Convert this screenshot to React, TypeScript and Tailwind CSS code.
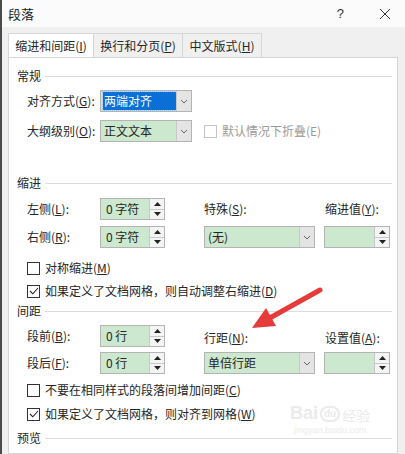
import React from 'react'

const green = 'bg-[#cce8cf]'

function SectionHeader({ title }: { title: string }) {
  return (
    <div className="h-[20px] flex items-center gap-[4px]">
      <span className="leading-none">{title}</span>
      <div className="flex-1 h-px bg-[#dcdcdc]" />
    </div>
  )
}

function Chevron() {
  return (
    <svg width="8" height="5" viewBox="0 0 8 5">
      <path d="M1 1 L4 4 L7 1" fill="none" stroke="#666" strokeWidth="1" />
    </svg>
  )
}

function Select({ value, w, selected }: { value: string; w: string; selected?: boolean }) {
  return (
    <div className={`${w} h-[22px] border border-[#b4b4b4] ${green} flex`}>
      <div className="flex-1 flex items-center pl-[2px]">
        {selected ? (
          <span className="h-[18px] w-full flex items-center px-[1px] bg-[#0a6fd6] text-white outline outline-1 outline-dotted outline-[#9bc3ef]">
            {value}
          </span>
        ) : (
          <span className="pl-[1px]">{value}</span>
        )}
      </div>
      <div className="w-[15px] bg-[#e4e4e4] border-l border-[#c8c8c8] flex items-center justify-center">
        <Chevron />
      </div>
    </div>
  )
}

function Spin({ value, w }: { value?: string; w: string }) {
  return (
    <div className={`${w} h-[22px] border border-[#b4b4b4] ${green} flex`}>
      <div className="flex-1 flex items-center pl-[5px]">{value}</div>
      <div className="w-[15px] bg-[#f4f4f4] border-l border-[#c8c8c8] flex flex-col">
        <div className="flex-1 flex items-center justify-center border-b border-[#c8c8c8]">
          <svg width="7" height="4" viewBox="0 0 7 4">
            <path d="M0 4 L3.5 0 L7 4 Z" fill="#222" />
          </svg>
        </div>
        <div className="flex-1 flex items-center justify-center">
          <svg width="7" height="4" viewBox="0 0 7 4">
            <path d="M0 0 L3.5 4 L7 0 Z" fill="#222" />
          </svg>
        </div>
      </div>
    </div>
  )
}

function Checkbox({ checked, disabled }: { checked?: boolean; disabled?: boolean }) {
  return (
    <div
      className={`w-[13px] h-[13px] border bg-white flex items-center justify-center ${
        disabled ? 'border-[#c4c4c4]' : 'border-[#333]'
      }`}
    >
      {checked && (
        <svg width="10" height="8" viewBox="0 0 10 8">
          <path d="M1 4 L3.8 6.8 L9 1" fill="none" stroke="#222" strokeWidth="1.1" />
        </svg>
      )}
    </div>
  )
}

function CheckRow({ checked, children }: { checked?: boolean; children: React.ReactNode }) {
  return (
    <div className="h-[20px] flex items-center gap-[5px] ml-[10px]">
      <Checkbox checked={checked} />
      <span>{children}</span>
    </div>
  )
}

export default function App() {
  return (
    <div className="w-[405px] h-[454px] overflow-hidden bg-[#f0f0f0] border-l-2 border-[#4b4b4b] flex flex-col relative text-[12px] text-[#262626] font-['Microsoft_YaHei','Noto_Sans_CJK_SC',sans-serif]">
      {/* title bar */}
      <div className="h-[27px] shrink-0 bg-[#fbfbfb] flex items-center pl-[6px] pr-[14px]">
        <span className="text-[13px] text-[#222]">段落</span>
        <span className="ml-auto text-[13px] text-[#333] font-['Liberation_Sans',sans-serif]">?</span>
        <svg className="ml-[35px]" width="12" height="12" viewBox="0 0 12 12">
          <path d="M1 1 L11 11 M11 1 L1 11" stroke="#333" strokeWidth="1" />
        </svg>
      </div>

      {/* tabs */}
      <div className="flex pl-[6px] pt-[6px] shrink-0">
        <div className="w-[86px] h-[24px] bg-white border border-b-0 border-[#d6d6d6] flex items-center justify-center">
          缩进和间距(<u>I</u>)
        </div>
        <div className="w-[89px] h-[24px] border-t border-r border-[#d6d6d6] flex items-center justify-center">
          换行和分页(<u>P</u>)
        </div>
        <div className="w-[79px] h-[24px] border-t border-r border-[#d6d6d6] flex items-center justify-center">
          中文版式(<u>H</u>)
        </div>
      </div>

      {/* panel */}
      <div className="flex-1 ml-[6px] mr-[7px] bg-white border border-[#d6d6d6] pl-[8px] pr-[5px] pt-[8px] flex flex-col">
        <SectionHeader title="常规" />
        <div className="mt-[4px] h-[22px] flex items-center ml-[10px]">
          <span className="w-[73px]">对齐方式(<u>G</u>):</span>
          <Select value="两端对齐" w="w-[92px]" selected />
        </div>
        <div className="mt-[8px] h-[22px] flex items-center ml-[10px]">
          <span className="w-[73px]">大纲级别(<u>O</u>):</span>
          <Select value="正文文本" w="w-[92px]" />
          <div className="ml-[12px] flex items-center gap-[5px] text-[#9a9a9a]">
            <Checkbox disabled />
            <span>默认情况下折叠(E)</span>
          </div>
        </div>

        <div className="mt-[31px]">
          <SectionHeader title="缩进" />
        </div>
        <div className="mt-[5px] h-[22px] flex items-center ml-[10px]">
          <span className="w-[73px]">左侧(<u>L</u>):</span>
          <Spin value="0 字符" w="w-[65px]" />
          <span className="ml-[39px] w-[121px]">特殊(<u>S</u>):</span>
          <span>缩进值(<u>Y</u>):</span>
        </div>
        <div className="mt-[6px] h-[22px] flex items-center ml-[10px]">
          <span className="w-[73px]">右侧(<u>R</u>):</span>
          <Spin value="0 字符" w="w-[65px]" />
          <div className="ml-[39px]">
            <Select value="(无)" w="w-[111px]" />
          </div>
          <div className="ml-[9px]">
            <Spin w="w-[66px]" />
          </div>
        </div>
        <div className="mt-[10px]">
          <CheckRow>
            对称缩进(<u>M</u>)
          </CheckRow>
        </div>
        <div className="mt-[3px]">
          <CheckRow checked>
            如果定义了文档网格，则自动调整右缩进(<u>D</u>)
          </CheckRow>
        </div>

        <SectionHeader title="间距" />
        <div className="mt-[4px] h-[22px] flex items-center ml-[10px]">
          <span className="w-[73px]">段前(<u>B</u>):</span>
          <Spin value="0 行" w="w-[65px]" />
          <span className="ml-[39px] w-[121px] mt-[4px]">行距(<u>N</u>):</span>
          <span className="mt-[4px]">设置值(<u>A</u>):</span>
        </div>
        <div className="mt-[5px] h-[22px] flex items-center ml-[10px]">
          <span className="w-[73px]">段后(<u>F</u>):</span>
          <Spin value="0 行" w="w-[65px]" />
          <div className="ml-[39px]">
            <Select value="单倍行距" w="w-[111px]" />
          </div>
          <div className="ml-[9px]">
            <Spin w="w-[66px]" />
          </div>
        </div>
        <div className="mt-[6px]">
          <CheckRow>
            不要在相同样式的段落间增加间距(<u>C</u>)
          </CheckRow>
        </div>
        <div className="mt-[4px]">
          <CheckRow checked>
            如果定义了文档网格，则对齐到网格(<u>W</u>)
          </CheckRow>
        </div>
        <div className="mt-[4px]">
          <SectionHeader title="预览" />
        </div>
      </div>

      {/* watermark */}
      <div className="absolute left-[288px] top-[404px] flex flex-col items-start text-[#ebebeb] pointer-events-none">
        <div className="flex items-end gap-[2px] leading-none">
          <span className="text-[18px] font-bold font-['Liberation_Sans',sans-serif]">Bai</span>
          <span className="text-[10px] font-bold border-2 border-[#ebebeb] rounded-full px-[2px] py-[1px] font-['Liberation_Sans',sans-serif]">du</span>
          <span className="text-[14px]">经验</span>
        </div>
        <span className="text-[9px] leading-none mt-[4px] ml-[4px] font-['Liberation_Sans',sans-serif]">jingyan.baidu.com</span>
      </div>

      {/* red arrow */}
      <svg className="absolute left-0 top-0 pointer-events-none" width="405" height="454">
        <line x1="318" y1="290" x2="266" y2="319" stroke="#e53b3b" strokeWidth="5" strokeLinecap="round" />
        <polygon points="250,328 274,326 264,308" fill="#e53b3b" />
      </svg>
    </div>
  )
}
